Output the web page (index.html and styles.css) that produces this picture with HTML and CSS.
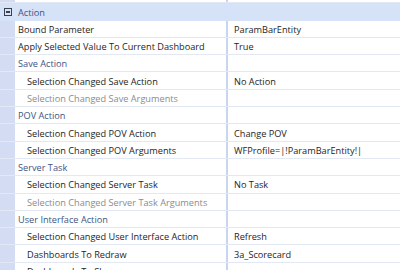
FILE: index.html
```html
<!DOCTYPE html>
<html lang="en">
<head>
    <meta charset="UTF-8">
    <title>Action Properties</title>
    <link rel="stylesheet" href="styles.css">
</head>
<body>
    <div class="props">
        <div class="row partial">
            <div class="gutter"></div>
            <div class="name">Display Format Settings</div>
            <div class="value">WidthPercent=100, Height=Auto</div>
        </div>

        <div class="row header">
            <div class="gutter"><span class="toggle"></span></div>
            <div class="name">Action</div>
        </div>

        <div class="row">
            <div class="gutter"></div>
            <div class="name">Bound Parameter</div>
            <div class="value">ParamBarEntity</div>
        </div>
        <div class="row">
            <div class="gutter"></div>
            <div class="name">Apply Selected Value To Current Dashboard</div>
            <div class="value">True</div>
        </div>

        <!-- 保存 -->
        <div class="row category">
            <div class="gutter"></div>
            <div class="name">Save Action</div>
            <div class="value"></div>
        </div>
        <div class="row">
            <div class="gutter"></div>
            <div class="name sub">Selection Changed Save Action</div>
            <div class="value">No Action</div>
        </div>
        <div class="row disabled">
            <div class="gutter"></div>
            <div class="name sub">Selection Changed Save Arguments</div>
            <div class="value"></div>
        </div>

        <!-- POV -->
        <div class="row category">
            <div class="gutter"></div>
            <div class="name">POV Action</div>
            <div class="value"></div>
        </div>
        <div class="row">
            <div class="gutter"></div>
            <div class="name sub">Selection Changed POV Action</div>
            <div class="value">Change POV</div>
        </div>
        <div class="row">
            <div class="gutter"></div>
            <div class="name sub">Selection Changed POV Arguments</div>
            <div class="value">WFProfile=|!ParamBarEntity!|</div>
        </div>

        <!-- 服务器任务 -->
        <div class="row category">
            <div class="gutter"></div>
            <div class="name">Server Task</div>
            <div class="value"></div>
        </div>
        <div class="row">
            <div class="gutter"></div>
            <div class="name sub">Selection Changed Server Task</div>
            <div class="value">No Task</div>
        </div>
        <div class="row disabled">
            <div class="gutter"></div>
            <div class="name sub">Selection Changed Server Task Arguments</div>
            <div class="value"></div>
        </div>

        <!-- 界面 -->
        <div class="row category">
            <div class="gutter"></div>
            <div class="name">User Interface Action</div>
            <div class="value"></div>
        </div>
        <div class="row">
            <div class="gutter"></div>
            <div class="name sub">Selection Changed User Interface Action</div>
            <div class="value">Refresh</div>
        </div>
        <div class="row">
            <div class="gutter"></div>
            <div class="name sub">Dashboards To Redraw</div>
            <div class="value">3a_Scorecard</div>
        </div>
        <div class="row">
            <div class="gutter"></div>
            <div class="name sub">Dashboards To Show</div>
            <div class="value"></div>
        </div>
    </div>
</body>
</html>
```

FILE: styles.css
```css
:root {
    --gutter-bg: #d3dcf2;
    --header-bg: #d6e2f7;
    --line: #e2e8f4;
    --divider: #c8d5ef;
    --text: #1e1e1e;
    --category: #3e5584;
    --muted: #8c8c8c;
}

* {
    margin: 0;
    padding: 0;
    box-sizing: border-box;
}

body {
    background: #ffffff;
    color: var(--text);
    font-family: 'Open Sans', 'Noto Sans', sans-serif;
    font-size: 9.2px;
    overflow: hidden;
}

.props {
    width: 400px;
}

.row {
    display: grid;
    grid-template-columns: 15px 211px 1fr;
    height: 17.3px;
    border-bottom: 1px solid var(--line);
    align-items: center;
    white-space: nowrap;
    overflow: hidden;
}

.row.partial {
    margin-top: -14px;
}

.row.partial .name,
.row.partial .value {
    padding-bottom: 6px;
}

.gutter {
    height: 100%;
    background: var(--gutter-bg);
    display: flex;
    align-items: center;
    justify-content: center;
}

.name {
    padding-left: 3px;
    padding-top: 1px;
    overflow: hidden;
}

.name.sub {
    padding-left: 12px;
}

.value {
    height: 100%;
    border-left: 2px solid var(--divider);
    padding-left: 6px;
    padding-top: 1px;
    display: flex;
    align-items: center;
}

/* 分组标题 */
.header {
    background: var(--header-bg);
    border-bottom: none;
}

.header .gutter {
    background: transparent;
}

.header .name {
    color: var(--category);
}

.toggle {
    width: 8px;
    height: 8px;
    border: 1px solid #3a3f4c;
    position: relative;
    margin-left: 1px;
}

.toggle::after {
    content: '';
    position: absolute;
    left: 1px;
    right: 1px;
    top: 2px;
    height: 2px;
    background: #3a3f4c;
}

.category .name {
    color: var(--category);
}

.disabled .name {
    color: var(--muted);
}
```
